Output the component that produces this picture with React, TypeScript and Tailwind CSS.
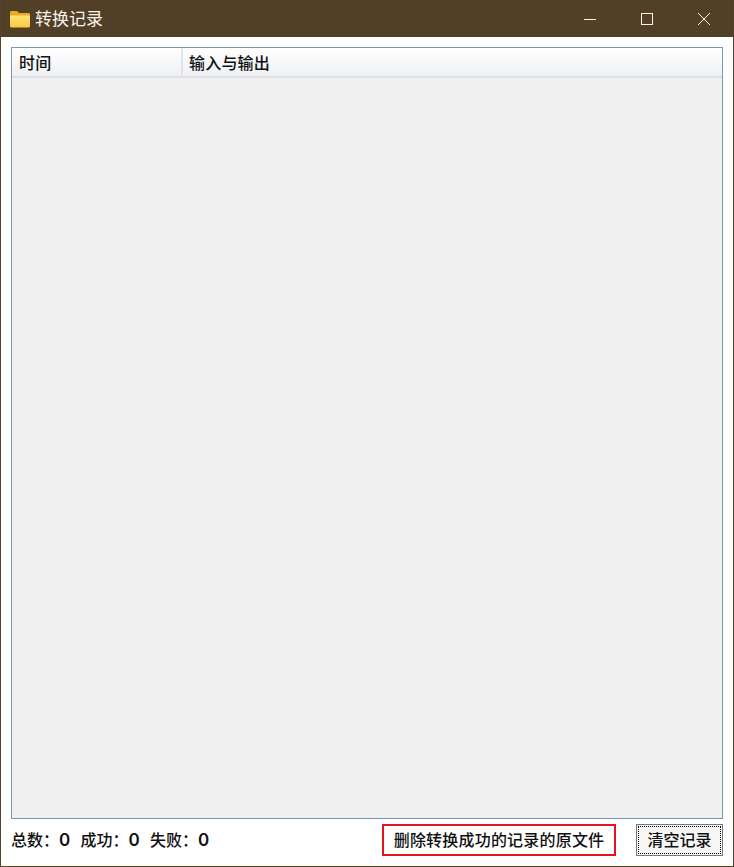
export default function App() {
  const font = { fontFamily: '"Noto Sans CJK SC", "Noto Sans", sans-serif' };
  return (
    <div className="w-[734px] h-[867px] flex flex-col bg-white border-x border-b border-[#54422a] overflow-hidden" style={font}>
      <div className="h-[37px] shrink-0 -mx-px bg-[#523f27] flex items-center pl-[10px]">
        <svg width="20" height="18" viewBox="0 0 20 18" className="shrink-0">
          <defs>
            <linearGradient id="folderFront" x1="0" y1="0" x2="0" y2="1">
              <stop offset="0" stopColor="#ffe27a" />
              <stop offset="1" stopColor="#fcc83c" />
            </linearGradient>
          </defs>
          <path d="M0 2.5 C0 1.6 .6 1 1.5 1 H7 L9 3 H18.5 C19.4 3 20 3.6 20 4.5 V8 H0Z" fill="#eeaa22" />
          <path d="M0 5.5 H20 V16 C20 16.9 19.4 17.5 18.5 17.5 H1.5 C.6 17.5 0 16.9 0 16Z" fill="url(#folderFront)" />
        </svg>
        <span className="ml-[5px] pb-[3px] text-[17px] leading-none text-[#f7f3ea]">转换记录</span>
        <div className="ml-auto flex items-center pr-[2px]">
          <div className="w-[57px] h-[37px] flex items-center justify-center">
            <svg width="12" height="12" viewBox="0 0 12 12"><path d="M0 6.5H12" stroke="#fff6e0" strokeWidth="1" /></svg>
          </div>
          <div className="w-[57px] h-[37px] flex items-center justify-center">
            <svg width="12" height="12" viewBox="0 0 12 12"><rect x=".5" y=".5" width="11" height="11" fill="none" stroke="#fff6e0" /></svg>
          </div>
          <div className="w-[57px] h-[37px] flex items-center justify-center">
            <svg width="12" height="12" viewBox="0 0 12 12"><path d="M0 0L12 12M12 0L0 12" stroke="#fff6e0" strokeWidth="1" /></svg>
          </div>
        </div>
      </div>
      <div className="flex-1 min-h-0 flex flex-col pt-[10px] pl-[10px] pr-[10px]">
        <div className="flex-1 min-h-0 border border-[#7a98b0] bg-[#f0f0f0] flex flex-col">
          <div className="h-[30px] shrink-0 flex border-b-2 border-[#dcdfe4] bg-gradient-to-b from-white to-[#eef0f3] text-[16px] font-medium text-[#111] tracking-[0.2px]">
            <div className="w-[171px] pl-[7px] flex items-center border-r-2 border-[#e4e4e6]">时间</div>
            <div className="flex-1 pl-[6px] flex items-center">输入与输出</div>
          </div>
        </div>
        <div className="h-[47px] shrink-0 flex items-start pt-[5px] text-[16px] text-[#111]">
          <div className="h-[32px] flex items-center font-medium">
            <div className="flex items-baseline">
              <span>总数：</span><span className="w-[21.5px] text-[17px] font-[Inter] font-semibold">0</span>
              <span>成功：</span><span className="w-[21.5px] text-[17px] font-[Inter] font-semibold">0</span>
              <span>失败：</span><span className="text-[17px] font-[Inter] font-semibold">0</span>
            </div>
          </div>
          <button className="ml-auto w-[234px] h-[32px] pb-[2px] border-2 border-[#e0141e] bg-white text-[16px] font-medium tracking-[0.2px] text-[#111] flex items-center justify-center">删除转换成功的记录的原文件</button>
          <button className="ml-[20px] w-[87px] h-[32px] border border-[#777] bg-[#f6f6f6] p-px flex">
            <span className="flex-1 pb-[2px] flex items-center justify-center border border-dotted border-black text-[16px] font-medium text-[#111]">清空记录</span>
          </button>
        </div>
      </div>
    </div>
  );
}
